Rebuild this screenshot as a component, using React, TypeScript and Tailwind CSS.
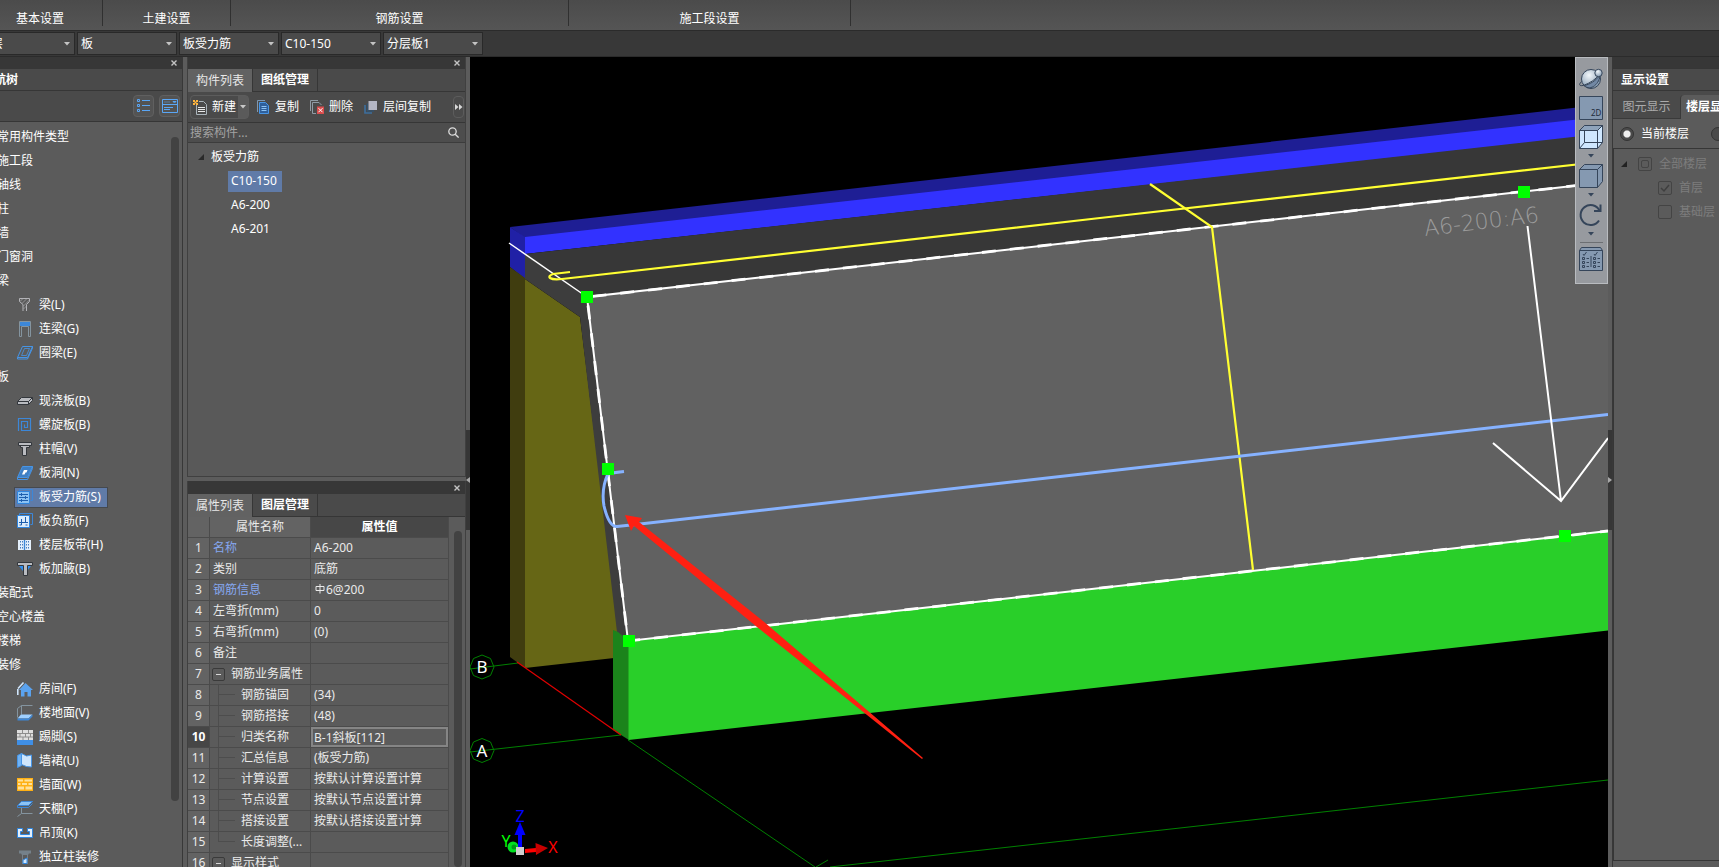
import { useState } from "react";
import type { ReactNode } from "react";
import clsx from "clsx";

/* ---------- small glyphs ---------- */

function Caret({ className }: { className?: string }) {
  return (
    <svg viewBox="0 0 6 4" className={clsx("w-1.5 h-1 shrink-0", className)} fill="currentColor" aria-hidden="true">
      <path d="M0 0h6L3 3.6z" />
    </svg>
  );
}

function CloseButton() {
  return (
    <button type="button" aria-label="关闭" className="mr-1 text-[#c4c4c4]">
      <svg viewBox="0 0 8 8" className="w-2 h-2" stroke="currentColor" strokeWidth="1.4">
        <path d="M1.5 1.5l5 5M6.5 1.5l-5 5" />
      </svg>
    </button>
  );
}

function Icon({ children }: { children: ReactNode }) {
  return (
    <svg viewBox="0 0 16 16" className="w-4 h-4 shrink-0" fill="none" aria-hidden="true">
      {children}
    </svg>
  );
}

const icons: Record<string, ReactNode> = {
  beam: (
    <Icon>
      <path d="M2.5 1.500h10v3l-3 3v6.500M6 14V7.500l-3.500-3v-3" stroke="#b4b4b8" />
      <path d="M3 4.500l3-3M5 6.500l5-5M6.500 9l6-6M6.500 12l3-3" stroke="#a9a9ad" strokeWidth=".7" />
    </Icon>
  ),
  linkBeam: (
    <Icon>
      <path d="M2.500 15.500V.5h11v15h-2v-10h-7v10z" stroke="#84949f" />
      <path d="M3 1h10v4H3z" fill="#3c87d8" />
    </Icon>
  ),
  ringBeam: (
    <Icon>
      <path d="M5.500 1.500h10l-5 11h-10zM.5 12.500v1.500h10l5-11V1.500" stroke="#4795e6" />
      <path d="M7.500 3.500h5l-3 7h-5z" stroke="#4795e6" strokeWidth=".8" />
    </Icon>
  ),
  slab: (
    <Icon>
      <path d="M.5 8.500l4-4h11v3l-4 4H.5z" fill="#b9bbc0" stroke="#33373c" />
      <path d="M.5 8.500h11l4-4M11.500 8.500v3" stroke="#33373c" />
    </Icon>
  ),
  spiral: (
    <Icon>
      <path d="M1.500 14V1.500h12v12H4.500v-9h6v6h-3v-3" stroke="#3c87d8" strokeWidth="1.200" />
    </Icon>
  ),
  cap: (
    <Icon>
      <path d="M1.500 1.500h13v3h-2v2h-3v8h-4v-8h-2v-2h-2z" fill="#b9bbc0" stroke="#33373c" />
      <path d="M3 4.500h10" stroke="#33373c" />
    </Icon>
  ),
  hole: (
    <Icon>
      <path d="M5.500 1.500h10l-5 11h-10z" fill="#3f7fc4" stroke="#4795e6" />
      <path d="M.5 12.500v2h10l5-11v-2" stroke="#4795e6" />
      <path d="M7 5h3.500L9.500 7.500H8.500L7.500 9.500H5L6 7z" fill="#fff" />
    </Icon>
  ),
  mainBar: (
    <Icon>
      <path d="M2.500 2.500v-2h13v11h-2" stroke="#3c87d8" />
      <path d="M.5 2.500h12v12H.5z" fill="#8cc3f5" stroke="#2f86e0" />
      <path d="M2 5.500h9M2 8.500h9M2 11.500h9M4.500 4v3M8.500 7v3M4.500 10v3" stroke="#1e5fae" />
    </Icon>
  ),
  negBar: (
    <Icon>
      <path d="M2.500 2.500v-2h13v11h-2" stroke="#3c87d8" />
      <path d="M.5 2.500h12v12H.5z" fill="#dcecfb" stroke="#2f86e0" />
      <path d="M2 9.500h9M4.500 6v6M8.500 4v6M2.500 12h2M8.500 12h2" stroke="#1e5fae" />
    </Icon>
  ),
  strip: (
    <Icon>
      <path d="M1 3h13v10H1z" fill="#e4f0fc" />
      <path d="M7.500 3v10" stroke="#3c87d8" strokeWidth="1.400" />
      <path d="M3.500 4v8M5.500 4v8M9.500 4v8M11.500 4v8" stroke="#1e5fae" strokeWidth=".8" strokeDasharray="1.500 1.500" />
    </Icon>
  ),
  haunch: (
    <Icon>
      <path d="M2 5h12l-4 5H6z" fill="#2f8ff0" />
      <path d="M.5 1.500h15v3h-5v10h-4v-10h-6z" fill="#b9bbc0" stroke="#33373c" />
    </Icon>
  ),
  house: (
    <Icon>
      <path d="M8.500 2L16 9h-2v6.500h-3.500V11h-3v4.500H4V9H2z" fill="#5aa2ee" />
      <path d="M1 7.500L6.500 1.500M.8 8v6" stroke="#cfe5fb" strokeWidth="1.600" />
    </Icon>
  ),
  floor: (
    <Icon>
      <path d="M.5 3.500l4-3h11M4.500.5v9M.5 3.500v9" stroke="#84949f" />
      <path d="M4 9.500h11.500l-4 4H.5z" fill="#9fd0ff" />
      <path d="M.5 13.500h11l4-4v2l-4 4H.5z" fill="#3c87d8" />
    </Icon>
  ),
  skirting: (
    <Icon>
      <path d="M0 1h16v10H0z" fill="#dedede" />
      <path d="M0 4.500h16M0 8h16M5.500 1v3.500M11.500 1v3.500M3 4.500V8M8.500 4.500V8M13.500 4.500V8M6 8v3M11.500 8v3" stroke="#8d8d8d" />
      <path d="M0 11h16v5H0z" fill="#3f8fe6" />
    </Icon>
  ),
  dado: (
    <Icon>
      <path d="M.5 2.500l4-2v12l-4 2z" fill="#6fb2f5" stroke="#4795e6" />
      <path d="M4.500.5l5 2.500 5-1v12l-5-.5-5-2z" fill="#cfe5fb" stroke="#4795e6" />
    </Icon>
  ),
  wall: (
    <Icon>
      <path d="M0 1h16v13H0z" fill="#ffb014" />
      <path d="M1 2.500h5v2H1zM7.500 2.500H15v2H7.500zM1 6h2.500v2H1zM5 6h5v2H5zM11.500 6H15v2h-3.500zM1 9.500h6v3H1zM8.500 9.500H15v3H8.500z" fill="#ffe19c" />
    </Icon>
  ),
  canopy: (
    <Icon>
      <path d="M4.500 6v6.500h11M4.500 12.500l-4 3" stroke="#84949f" />
      <path d="M4.500.5h11l-4 4H.5z" fill="#8cc3f5" stroke="#3c87d8" />
      <path d="M.5 5v1.500h11l4-4" stroke="#3c87d8" />
    </Icon>
  ),
  ceiling: (
    <Icon>
      <path d="M.5 3.500h5v3h-2v3h9v-3h-2v-3h5v9H.5z" fill="#e4f0fc" stroke="#2f86e0" />
    </Icon>
  ),
  column: (
    <Icon>
      <path d="M2 1.500h12v3h-2l-1 1.500H5L4 4.500H2z" fill="#75818a" />
      <path d="M5.500 6v9M10.500 6v9" stroke="#75818a" />
      <path d="M6 14.500V11l4-2v5.500z" fill="#cfe5fb" stroke="#2f86e0" />
    </Icon>
  ),
};

/* ---------- data ---------- */

type NavItem = { label: string; icon?: string };

const navItems: NavItem[] = [
  { label: "常用构件类型" },
  { label: "施工段" },
  { label: "轴线" },
  { label: "柱" },
  { label: "墙" },
  { label: "门窗洞" },
  { label: "梁" },
  { label: "梁(L)", icon: "beam" },
  { label: "连梁(G)", icon: "linkBeam" },
  { label: "圈梁(E)", icon: "ringBeam" },
  { label: "板" },
  { label: "现浇板(B)", icon: "slab" },
  { label: "螺旋板(B)", icon: "spiral" },
  { label: "柱帽(V)", icon: "cap" },
  { label: "板洞(N)", icon: "hole" },
  { label: "板受力筋(S)", icon: "mainBar" },
  { label: "板负筋(F)", icon: "negBar" },
  { label: "楼层板带(H)", icon: "strip" },
  { label: "板加腋(B)", icon: "haunch" },
  { label: "装配式" },
  { label: "空心楼盖" },
  { label: "楼梯" },
  { label: "装修" },
  { label: "房间(F)", icon: "house" },
  { label: "楼地面(V)", icon: "floor" },
  { label: "踢脚(S)", icon: "skirting" },
  { label: "墙裙(U)", icon: "dado" },
  { label: "墙面(W)", icon: "wall" },
  { label: "天棚(P)", icon: "canopy" },
  { label: "吊顶(K)", icon: "ceiling" },
  { label: "独立柱装修", icon: "column" },
];

type Prop = { name: string; value?: string; kind?: "link" | "group" | "child" | "last" };

const props: Prop[] = [
  { name: "名称", value: "A6-200", kind: "link" },
  { name: "类别", value: "底筋" },
  { name: "钢筋信息", value: "6@200", kind: "link" },
  { name: "左弯折(mm)", value: "0" },
  { name: "右弯折(mm)", value: "(0)" },
  { name: "备注" },
  { name: "钢筋业务属性", kind: "group" },
  { name: "钢筋锚固", value: "(34)", kind: "child" },
  { name: "钢筋搭接", value: "(48)", kind: "child" },
  { name: "归类名称", value: "B-1斜板[112]", kind: "child" },
  { name: "汇总信息", value: "(板受力筋)", kind: "child" },
  { name: "计算设置", value: "按默认计算设置计算", kind: "child" },
  { name: "节点设置", value: "按默认节点设置计算", kind: "child" },
  { name: "搭接设置", value: "按默认搭接设置计算", kind: "child" },
  { name: "长度调整(...", kind: "last" },
  { name: "显示样式", kind: "group" },
];

const combos = [
  { label: "楼层", value: "首层" },
  { label: "构件大类", value: "板" },
  { label: "构件类型", value: "板受力筋" },
  { label: "构件", value: "C10-150" },
  { label: "分层", value: "分层板1" },
];

/* ---------- top bars ---------- */

function Ribbon() {
  const cell = "h-[26px] shrink-0 pt-3 text-center border-r border-[#303030] leading-[14px]";
  return (
    <header className="flex h-[31px] shrink-0 bg-linear-to-b from-[#4b4b4b] to-[#555] border-b border-[#2b2b2b]">
      <div className={clsx(cell, "-ml-[22px] w-[125px]")}>基本设置</div>
      <div className={clsx(cell, "w-32")}>土建设置</div>
      <div className={clsx(cell, "w-[338px]")}>钢筋设置</div>
      <div className={clsx(cell, "w-[282px]")}>施工段设置</div>
    </header>
  );
}

function ComboBar() {
  return (
    <div className="flex h-[26px] shrink-0 items-center gap-0.5 bg-[#383838] border-b border-[#2b2b2b] -ml-[25px]">
      {combos.map((c) => (
        <label key={c.label} className="flex h-[23px] w-[100px] items-center border border-[#292929] bg-[#4a4a4a] pl-[3px] pr-1">
          <select aria-label={c.label} className="min-w-0 flex-1 appearance-none bg-transparent text-xs outline-none">
            <option>{c.value}</option>
          </select>
          <Caret className="text-[#c4c4c4]" />
        </label>
      ))}
    </div>
  );
}

/* ---------- navigation tree ---------- */

function NavPanel() {
  const [selected, setSelected] = useState("板受力筋(S)");
  const toolBtn = "flex h-[22px] w-[21px] items-center justify-center rounded border border-[#606060] bg-[#535353]";
  return (
    <aside className="flex w-[183px] shrink-0 flex-col overflow-hidden border-r border-[#383838] bg-[#4a4a4a]">
      <div className="flex h-3 shrink-0 items-center justify-end bg-[#373737]">
        <CloseButton />
      </div>
      <h2 className="-ml-[18px] flex h-[22px] shrink-0 items-center border-b border-[#363636] font-bold">导航树</h2>
      <div className="flex h-[31px] shrink-0 items-center justify-end gap-[5px] border-b border-[#363636] pr-0.5">
        <button type="button" aria-label="列表视图" className={toolBtn}>
          <svg viewBox="0 0 14 14" className="h-3.5 w-3.5" fill="none" stroke="#5aa6f5">
            <path d="M.5.5h2v2h-2zM.5 5.500h2v2h-2zM.5 10.500h2v2h-2zM5 1.500h8M5 6.500h8M5 11.500h8" />
          </svg>
        </button>
        <button type="button" aria-label="图标视图" className={toolBtn}>
          <svg viewBox="0 0 16 14" className="h-3.5 w-4" fill="none" stroke="#5aa6f5">
            <path d="M.5.5h15v13H.5zM.5 5.500h15M2 8.500h9M2 10.500h6" />
            <path d="M3 3.500v-1M5 3.500v-1M7 3.500v-1M11 2.500h3l-1.500 1.500z" />
          </svg>
        </button>
      </div>
      <div className="flex min-h-0 flex-1 overflow-hidden bg-[#5b5b5b] pt-[3px]">
        <ul className="-ml-[3px] min-w-0 flex-1">
          {navItems.map((item) => (
            <li key={item.label} className="flex h-6 items-center">
              {item.icon ? (
                <button
                  type="button"
                  onClick={() => setSelected(item.label)}
                  className={clsx(
                    "ml-[17px] flex h-[21px] items-center gap-1.5 border pl-0.5 pr-1.5 whitespace-nowrap",
                    selected === item.label ? "border-[#45494f] bg-[#607ba8]" : "border-transparent"
                  )}
                >
                  {icons[item.icon]}
                  <span>{item.label}</span>
                </button>
              ) : (
                <button type="button">{item.label}</button>
              )}
            </li>
          ))}
        </ul>
        <div className="mt-3 mr-[3px] h-[664px] w-2 shrink-0 rounded-full bg-[#424242]" />
      </div>
    </aside>
  );
}

/* ---------- component list + properties ---------- */

function Tabs({ first, second }: { first: string; second: string }) {
  return (
    <div className="flex h-[23px] shrink-0 border-b border-[#363636] bg-[#4a4a4a]" role="tablist">
      <button type="button" role="tab" aria-selected="true" className="-mb-px h-[23px] w-16 bg-[#626262] pt-px text-[#e8e8e8]">
        {first}
      </button>
      <button type="button" role="tab" aria-selected="false" className="w-[66px] border-x border-[#363636] font-bold">
        {second}
      </button>
    </div>
  );
}

function ListToolbar() {
  return (
    <div className="flex h-[31px] shrink-0 items-center border-b border-[#363636] bg-[#4a4a4a] pl-0.5">
      <div className="flex h-6 w-[59px] items-center rounded border border-[#5c5c5c]">
        <button type="button" className="flex items-center gap-1 pl-0.5 pr-0.5">
          <svg viewBox="0 0 15 15" className="h-[15px] w-[15px]" fill="none">
            <path d="M3.500 5v9.500h10v-10l-3-3H6" stroke="#aab4bb" />
            <path d="M5 7.500h7M5 9.500h7M5 11.500h7" stroke="#e8e8e8" />
            <path d="M0 0h2v2H0zM3 0h2v2H3zM1.500 1.500h2v2h-2zM0 3h2v2H0zM3 3h2v2H3z" fill="#ffb43c" />
          </svg>
          新建
        </button>
        <button type="button" aria-label="新建选项" className="flex h-full flex-1 items-center justify-center bg-[#5a5a5a] text-[#c8c8c8]">
          <Caret />
        </button>
      </div>
      <button type="button" className="ml-[7px] flex items-center gap-[5px]">
        <svg viewBox="0 0 14 14" className="h-3.5 w-3.5" fill="none">
          <path d="M1.500 12V.5H9" stroke="#7b98b5" />
          <path d="M3.500 2.500h6l3 3v8h-9z" fill="#2f5f9a" stroke="#4795e6" />
          <path d="M5.500 6.500h5M5.500 8.500h5M5.500 10.500h5" stroke="#8cc3f5" />
        </svg>
        复制
      </button>
      <button type="button" className="ml-[11px] flex items-center gap-[5px]">
        <svg viewBox="0 0 14 14" className="h-3.5 w-3.5" fill="none">
          <path d="M.5 11V.5H8M2.500 13.500v-11H9l2.500 2.500M2.500 13.500H6" stroke="#8f9ba5" />
          <path d="M7 6.500h7V14H7z" fill="#d84c4c" />
          <path d="M8.500 8.200l4 4M12.500 8.200l-4 4" stroke="#fff" />
        </svg>
        删除
      </button>
      <button type="button" className="ml-[11px] flex items-center gap-[5px] whitespace-nowrap">
        <svg viewBox="0 0 14 14" className="h-3.5 w-3.5" fill="none">
          <path d="M1 5v8h7" stroke="#3c6f9f" strokeWidth="1.600" />
          <path d="M3.500 3.500v7.500H10" stroke="#33526e" strokeWidth="1.400" />
          <path d="M4.500 1h8.500v9H4.500z" fill="#b4b6c4" />
        </svg>
        层间复制
      </button>
      <button type="button" aria-label="更多" className="ml-auto mr-px flex h-[22px] w-[11px] items-center justify-center rounded border border-[#5c5c5c]">
        <svg viewBox="0 0 8 6" className="h-1.5 w-2 shrink-0" fill="#d8d8d8">
          <path d="M0 0l3.500 3L0 6zM4 0l3.500 3L4 6z" />
        </svg>
      </button>
    </div>
  );
}

function ComponentList() {
  const [selected, setSelected] = useState("C10-150");
  return (
    <section className="flex min-h-0 flex-1 flex-col border-x border-b border-[#404040] bg-[#595959]">
      <div className="flex h-3 shrink-0 items-center justify-end bg-[#373737]">
        <CloseButton />
      </div>
      <Tabs first="构件列表" second="图纸管理" />
      <ListToolbar />
      <label className="flex h-5 shrink-0 items-center border-b border-[#3c3c3c] bg-[#4d4d4d] pl-0.5 pr-1.5">
        <input
          type="text"
          aria-label="搜索构件"
          placeholder="搜索构件..."
          className="min-w-0 flex-1 bg-transparent text-xs outline-none placeholder:text-[#a2a2a2]"
        />
        <svg viewBox="0 0 11 11" className="h-[11px] w-[11px]" fill="none" stroke="#dcdcdc" strokeWidth="1.300">
          <circle cx="4.500" cy="4.500" r="3.700" />
          <path d="M7.200 7.200l3.400 3.400" />
        </svg>
      </label>
      <div className="pt-0.5">
        <button type="button" className="flex h-6 items-center gap-[7px] pl-2.5">
          <svg viewBox="0 0 6 6" className="h-1.5 w-1.5" fill="#2a2a2a">
            <path d="M6 0v6H0z" />
          </svg>
          板受力筋
        </button>
        <ul className="pl-10">
          {["C10-150", "A6-200", "A6-201"].map((name) => (
            <li key={name} className="flex h-6 items-center">
              <button
                type="button"
                onClick={() => setSelected(name)}
                className={clsx("h-[21px] pl-[3px] pr-[5px]", selected === name && "bg-[#607ba8]")}
              >
                {name}
              </button>
            </li>
          ))}
        </ul>
      </div>
    </section>
  );
}

function NameCell({ prop }: { prop: Prop }) {
  if (prop.kind === "group") {
    return (
      <div className="flex h-5 items-center gap-1.5 pl-0.5">
        <button type="button" aria-label="折叠" className="flex h-[13px] w-[13px] shrink-0 items-center justify-center rounded-xs border border-[#3a3a3a]">
          <span className="h-px w-[5px] bg-[#d8d8d8]" />
        </button>
        {prop.name}
      </div>
    );
  }
  if (prop.kind === "child" || prop.kind === "last") {
    return (
      <div className="flex h-5 items-center pl-2">
        <span className="flex h-full w-[17px] shrink-0 flex-col">
          <span className="h-2.5 border-b border-l border-[#4d4d4d]" />
          {prop.kind === "child" && <span className="flex-1 border-l border-[#4d4d4d]" />}
        </span>
        <span className="pl-1.5">{prop.name}</span>
      </div>
    );
  }
  return (
    <div className={clsx("flex h-5 items-center pl-[3px]", prop.kind === "link" && "text-[#86a8f0]")}>{prop.name}</div>
  );
}

function PropertyPanel() {
  return (
    <section className="flex h-[386px] shrink-0 flex-col overflow-hidden border-x border-[#404040] bg-[#5b5b5b]">
      <div className="flex h-[13px] shrink-0 items-center justify-end bg-[#373737]">
        <CloseButton />
      </div>
      <Tabs first="属性列表" second="图层管理" />
      <div className="flex min-h-0 flex-1 justify-between overflow-hidden">
        <table className="w-[261px] table-fixed border-separate border-spacing-0 self-start whitespace-nowrap text-[#eaeaea]">
          <colgroup>
            <col className="w-[22px]" />
            <col className="w-[101px]" />
            <col className="w-[138px]" />
          </colgroup>
          <thead>
            <tr className="h-[21px]">
              <th className="border-r border-b border-[#4b4b4b] bg-[#636363] p-0" aria-label="序号" />
              <th className="border-r border-b border-[#4b4b4b] bg-[#636363] p-0 text-center font-normal">属性名称</th>
              <th className="border-r border-b border-[#4b4b4b] bg-[#474747] p-0 text-center font-bold text-white">属性值</th>
            </tr>
          </thead>
          <tbody>
            {props.map((p, i) => (
              <tr key={p.name}>
                <td
                  className={clsx(
                    "h-[21px] border-r border-b border-[#4b4b4b] p-0 text-center",
                    i === 9 ? "bg-[#464646] font-bold text-white" : "bg-[#636363]"
                  )}
                >
                  {i + 1}
                </td>
                <td className="overflow-hidden border-r border-b border-[#4b4b4b] p-0">
                  <NameCell prop={p} />
                </td>
                <td className="border-r border-b border-[#4b4b4b] p-0">
                  {i === 9 ? (
                    <input
                      aria-label={p.name}
                      defaultValue={p.value}
                      className="block h-5 w-full border-2 border-[#858585] bg-transparent pl-px text-xs outline-none"
                    />
                  ) : (
                    <div className="flex h-5 items-center pl-[3px]">
                      {i === 2 && (
                        <svg viewBox="0 0 11 11" className="mb-1 h-[11px] w-3 shrink-0" fill="none" stroke="#eaeaea" aria-hidden="true">
                          <path d="M1.500 3.500h8v4h-8zM5.500 1v9.500" />
                        </svg>
                      )}
                      {p.value}
                    </div>
                  )}
                </td>
              </tr>
            ))}
          </tbody>
        </table>
        <div className="mr-[3px] mt-3.5 w-2 rounded-full bg-[#424242]" />
      </div>
    </section>
  );
}

/* ---------- 3d view ---------- */

function Scene() {
  const grips = [
    [587, 297],
    [608, 469],
    [629, 641],
    [1524, 192],
    [1565, 536],
  ];
  return (
    <svg viewBox="470 57 1138 810" preserveAspectRatio="xMinYMin slice" className="h-full w-full" fill="none">
      {/* beam at the back */}
      <path d="M510 227L1608 104V117L525 238z" fill="#1e1e94" />
      <path d="M525 237L1608 116V134L525 254z" fill="#3232ff" />
      <path d="M510 227L525 237V279L510 267z" fill="#2020a6" />

      {/* side wall */}
      <path d="M510 267L525 278V668L510 657z" fill="#403d0f" />
      <path d="M525 279L580 317L620 640L614 658L525 668z" fill="#666615" />

      {/* slab */}
      <path d="M525 254L1608 133V183L587 297z" fill="#373737" />
      <path d="M525 254L587 297L628 641L617 632L580 317L525 279z" fill="#3d3d3d" />
      <path d="M587 297L1608 182V531L628 641z" fill="#616161" />

      {/* front beam */}
      <path d="M613 630L618 632L629 641V740L613 730z" fill="#1b831b" />
      <path d="M628.500 641L1608 531V630.500L628.500 740z" fill="#29cf29" />

      {/* slab outline */}
      <path d="M509 243L587 297" stroke="#fff" strokeWidth="1.500" />
      <path d="M1608 182L587 297L628 641L1608 531" stroke="#fff" strokeWidth="2" />
      <path d="M1608 182L587 297L628 641L1608 531" stroke="#fff" strokeWidth="2.800" strokeDasharray="14 14" />

      {/* rebar */}
      <path d="M570 272L553 274Q548 276 550 278Q553 280 562 279L1100 218L1608 161" stroke="#ffff32" strokeWidth="2.200" />
      <path d="M1150 184L1212 227L1253 570" stroke="#ffff32" strokeWidth="2.200" />
      <path d="M624 471.500L608 473.500Q601 489 604 506Q609 527 617 526.500L640 524L1100 472L1608 414.500" stroke="#86b2ff" strokeWidth="3" />

      <text
        x="1425"
        y="236"
        transform="rotate(-7 1425 236)"
        fontSize="22"
        fontWeight="200"
        fontFamily="DejaVu Sans, sans-serif"
        fill="#9c9c9c"
      >
        A6-200:A6
      </text>
      <path d="M1527.500 226L1561 501M1493 443L1561 501L1608 438" stroke="#fff" strokeWidth="2" />

      {grips.map(([x, y]) => (
        <rect key={x} x={x - 6} y={y - 6} width="12" height="12" fill="#00ff00" />
      ))}

      {/* axis grid */}
      <path d="M470 669L518 663M470 752L621 735M628 740L815 867M816 867L828 860M830 867L1180 828L1608 780" stroke="#008000" />
      <path d="M517 662L621 735" stroke="#e00000" strokeWidth="1.200" />
      <path d="M482 655l8.500 3.500L494 667l-3.500 8.500L482 679l-8.500-3.500L470 667l3.500-8.500z" stroke="#008000" />
      <path d="M482 738.500l8.500 3.500 3.500 8.500-3.500 8.500L482 762.500l-8.500-3.500-3.500-8.500 3.500-8.500z" stroke="#008000" />
      <g fill="#fff" fontSize="17" textAnchor="middle">
        <text x="482" y="673">B</text>
        <text x="482" y="757">A</text>
      </g>

      {/* orientation gizmo */}
      <circle cx="513" cy="847" r="5.500" fill="#00e020" />
      <circle cx="514" cy="847" r="2.500" fill="#009a18" />
      <path d="M518 850V834h4v16z" fill="#0000ff" />
      <path d="M520 822l5.500 13h-11z" fill="#0000ff" />
      <path d="M525 849l11-1v4l-11 1z" fill="#ff0000" />
      <path d="M535.500 843l12.500 5-12 7z" fill="#c80000" />
      <path d="M516 847h8v8h-8z" fill="#cfcfcf" />
      <g fontSize="16" textAnchor="middle">
        <text x="520" y="822" fill="#0000ff">Z</text>
        <text x="506" y="847" fill="#00ff00">Y</text>
        <text x="553" y="853" fill="#ff0000">X</text>
      </g>

      {/* callout arrow */}
      <path d="M625 515L642 518L639 522L763 621L923 758L922 759L757 627L634 526L631 531z" fill="#ff2012" />
    </svg>
  );
}

function ViewTools() {
  const btn = "h-6 w-6 shrink-0";
  const svg = "block h-6 w-6";
  const ink = "#35455a";
  return (
    <div className="absolute right-0 top-0 flex h-[227px] w-[33px] flex-col items-center border border-[#b9bcc0] bg-[#979a9f] pl-[3px] pr-1 text-[#35455a]">
      <button type="button" aria-label="动态观察" className={clsx(btn, "mt-[9px]")}>
        <svg viewBox="0 0 24 24" className={svg} fill="none" stroke={ink}>
          <defs>
            <radialGradient id="ball" cx=".4" cy=".3" r=".8">
              <stop offset="0" stopColor="#f2f7fb" />
              <stop offset="1" stopColor="#7890a8" />
            </radialGradient>
          </defs>
          <circle cx="12" cy="12" r="9.500" fill="url(#ball)" />
          <path d="M2.500 14.500c-4 4-1 5 3 3.500C11 16 17 12 20 8" />
          <path d="M5 18.500c6-1 12-5 16-10.500 0 8-9 17-16 10.500z" fill="#7288a4" />
          <circle cx="19.500" cy="6" r="3.700" fill="url(#ball)" />
        </svg>
      </button>
      <button type="button" aria-label="二维" className={clsx(btn, "mt-[5px]")}>
        <svg viewBox="0 0 24 24" className={svg} stroke={ink}>
          <path d="M.5.5h23v23H.5z" fill="#8599b1" />
          <text x="12" y="20" fontSize="8" fill="#1f2c3c" stroke="none">
            2D
          </text>
        </svg>
      </button>
      <button type="button" aria-label="线框" className={clsx(btn, "mt-[5px]")}>
        <svg viewBox="0 0 24 24" className={svg} fill="none" stroke={ink}>
          <path d="M.5 5.500l5-5h18v17l-5 6H.5z" fill="#cfe7ff" />
          <path d="M.5 5.500l5-5h18l-5 5z" fill="#8ea3bb" />
          <path d="M.5 5.500h18v18M18.500 5.500l5-5M5.500 5.500v12h13M.5 23.500l5-6M18.500 17.500h5" />
        </svg>
      </button>
      <Caret className="mt-[5px]" />
      <button type="button" aria-label="实体" className={clsx(btn, "mt-1.5")}>
        <svg viewBox="0 0 24 24" className={svg} fill="none" stroke={ink}>
          <path d="M.5 5.500l5-5h18v17l-5 6H.5z" fill="#8599b1" />
          <path d="M.5 5.500h18v18M18.500 5.500l5-5" />
        </svg>
      </button>
      <Caret className="mt-[5px]" />
      <button type="button" aria-label="旋转" className={clsx(btn, "mt-1.5")}>
        <svg viewBox="0 0 24 24" className={svg} fill="none" stroke={ink} strokeWidth="2">
          <path d="M20.500 7.500A10 10 0 1 0 20 17.500" />
          <path d="M21.500 1.500v6.500h-6.500" />
        </svg>
      </button>
      <Caret className="mt-[5px]" />
      <div className="mt-1.5 h-px w-[23px] shrink-0 bg-[#6c6f73]" />
      <button type="button" aria-label="显示设置" className={clsx(btn, "mt-1")}>
        <svg viewBox="0 0 24 24" className={svg} fill="none" stroke={ink}>
          <path d="M.5 3.500l2-3h19l2 3v20H.5z" fill="#8599b1" />
          <path d="M.5 3.500h23M12 9v11M4 7l1 1.500L7.500 5M15 7l1 1.500L18.500 5" />
          <path d="M3.500 10.500h2v2h-2zM3.500 14.500h2v2h-2zM3.500 18.500h2v2h-2zM14.500 10.500h2v2h-2zM14.500 14.500h2v2h-2zM14.500 18.500h2v2h-2zM7.500 11.500H10M7.500 15.500H10M7.500 19.500H10M18.500 11.500H21M18.500 15.500H21M18.500 19.500H21" />
        </svg>
      </button>
    </div>
  );
}

function Splitter({ side }: { side: "left" | "right" }) {
  return (
    <div className="w-1 shrink-0 bg-[#5c5c5c] pt-[373px]">
      <div className="flex h-[100px] items-center justify-center bg-[#363636]">
        <svg viewBox="0 0 4 6" className="h-1.5 w-1" fill="#a8a8a8">
          <path d={side === "left" ? "M4 0v6L0 3z" : "M0 0v6l4-3z"} />
        </svg>
      </div>
    </div>
  );
}

/* ---------- display settings ---------- */

function FloorCheck({ label, state }: { label: string; state: "partial" | "on" | "off" }) {
  return (
    <label className="flex h-6 items-center gap-[7px] whitespace-nowrap text-[#7d7d7d]">
      <span className="grid place-items-center">
        <input
          type="checkbox"
          disabled
          defaultChecked={state === "on"}
          className="col-start-1 row-start-1 h-3.5 w-3.5 appearance-none rounded-xs border border-[#444]"
        />
        {state === "on" && (
          <svg viewBox="0 0 10 10" className="col-start-1 row-start-1 h-2.5 w-2.5" fill="none" stroke="#3f3f3f" strokeWidth="1.500">
            <path d="M1 5l3 3 5-6" />
          </svg>
        )}
        {state === "partial" && <span className="col-start-1 row-start-1 h-2 w-2 rounded-xs border border-[#444]" />}
      </span>
      {label}
    </label>
  );
}

function DisplayPanel() {
  const [scope, setScope] = useState("current");
  const radio =
    "h-3.5 w-3.5 shrink-0 appearance-none rounded-full border border-[#333] bg-[#4a4a4a] checked:bg-radial checked:from-[#eee] checked:from-35% checked:to-[#4a4a4a] checked:to-50%";
  return (
    <aside className="flex w-[107px] shrink-0 flex-col overflow-hidden border-l border-[#383838] bg-[#5b5b5b]">
      <div className="h-[11px] shrink-0 bg-[#373737]" />
      <h2 className="flex h-[23px] shrink-0 items-center border-y border-[#363636] bg-[#4a4a4a] pl-2 font-bold">显示设置</h2>
      <div className="flex h-7 shrink-0 whitespace-nowrap bg-[#4a4a4a] pt-1" role="tablist">
        <button type="button" role="tab" aria-selected="false" className="w-[67px] shrink-0 border-b border-[#3a3a3a] text-[#ababab]">
          图元显示
        </button>
        <button type="button" role="tab" aria-selected="true" className="shrink-0 rounded-tl-sm border-l border-[#3a3a3a] bg-[#5b5b5b] px-[5px] font-bold">
          楼层显示
        </button>
      </div>
      <div className="flex h-[30px] shrink-0 items-center whitespace-nowrap border-b border-[#363636] pl-[7px]">
        <label className="flex shrink-0 items-center gap-[7px]">
          <input type="radio" name="scope" className={radio} checked={scope === "current"} onChange={() => setScope("current")} />
          当前楼层
        </label>
        <label className="ml-[22px] flex shrink-0 items-center gap-[7px]">
          <input type="radio" name="scope" className={radio} checked={scope === "near"} onChange={() => setScope("near")} />
          相邻楼层
        </label>
      </div>
      <div className="mb-1.5 flex-1 border-b border-l border-[#363636] pl-[7px] pt-[3px]">
        <div className="flex items-center gap-[11px]">
          <svg viewBox="0 0 6 6" className="h-1.5 w-1.5" fill="#222">
            <path d="M6 0v6H0z" />
          </svg>
          <FloorCheck label="全部楼层" state="partial" />
        </div>
        <div className="pl-[37px]">
          <FloorCheck label="首层" state="on" />
          <FloorCheck label="基础层" state="off" />
        </div>
      </div>
    </aside>
  );
}

export default function App() {
  return (
    <div className="flex h-screen flex-col overflow-hidden bg-[#383838] font-['Noto_Sans','Noto_Sans_CJK_SC',sans-serif] text-xs text-white">
      <Ribbon />
      <ComboBar />
      <div className="flex min-h-0 flex-1 bg-[#5c5c5c]">
        <NavPanel />
        <div className="ml-1 flex w-[279px] shrink-0 flex-col gap-1">
          <ComponentList />
          <PropertyPanel />
        </div>
        <Splitter side="left" />
        <main className="relative min-w-0 flex-1 overflow-hidden bg-black">
          <Scene />
          <ViewTools />
        </main>
        <Splitter side="right" />
        <DisplayPanel />
      </div>
    </div>
  );
}
